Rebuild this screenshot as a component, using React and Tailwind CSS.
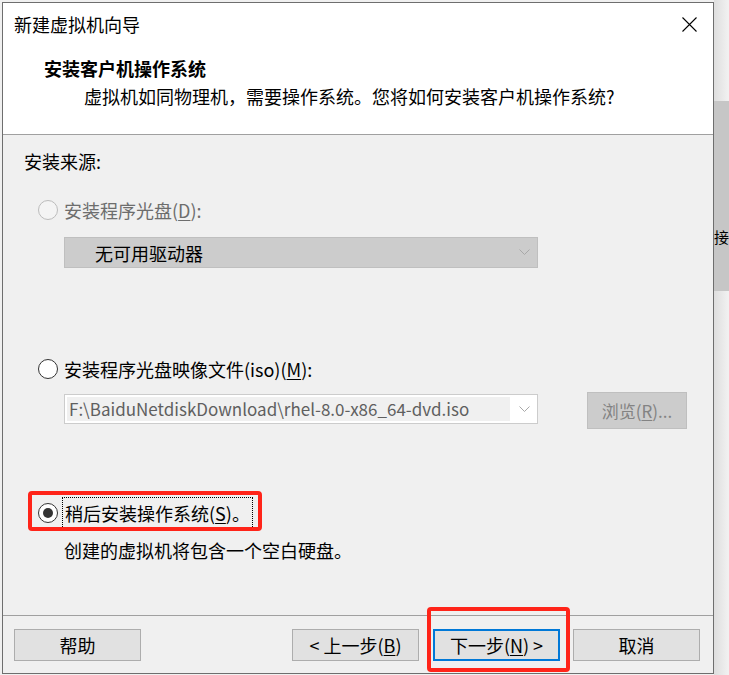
import React from 'react';

const font = "font-['Noto_Sans_CJK_SC','Noto_Sans',sans-serif]";

function Radio({ state }) {
  if (state === 'disabled') {
    return <span className="w-[20px] h-[20px] rounded-full border border-[#bcbcbc] bg-[#f4f4f4] shrink-0" />;
  }
  return (
    <span className="w-[20px] h-[20px] rounded-full border border-[#333333] bg-white shrink-0 flex items-center justify-center">
      {state === 'checked' && <span className="w-[10px] h-[10px] rounded-full bg-[#333333]" />}
    </span>
  );
}

function Chevron() {
  return (
    <svg width="11" height="7" viewBox="0 0 11 7" className="shrink-0">
      <polyline points="0.5,0.5 5.5,5.5 10.5,0.5" fill="none" stroke="#a8a8a8" strokeWidth="1" />
    </svg>
  );
}

function Button({ children, primary, className = '' }) {
  return (
    <div
      className={`w-[127px] h-[32px] flex items-center justify-center bg-[#e1e1e1] text-black text-[18px] leading-[24px] ${
        primary ? 'border-2 border-[#0078d7]' : 'border border-[#adadad]'
      } ${className}`}
    >
      {children}
    </div>
  );
}

export default function App() {
  return (
    <div className={`w-[729px] h-[675px] bg-[#f0f0f0] flex overflow-hidden ${font}`}>
      {/* dialog window */}
      <div className="mt-[2px] ml-[2px] w-[712px] h-[672px] shrink-0 border border-[#6e6e6e] bg-[#f0f0f0] flex flex-col">
        {/* title + header */}
        <div className="h-[132px] shrink-0 bg-white border-b border-[#a0a0a0]">
          <div className="pt-[9px] pl-[11px] pr-[16px] flex items-center justify-between">
            <span className="text-[18px] leading-[24px] text-black">新建虚拟机向导</span>
            <svg width="15" height="15" viewBox="0 0 15 15">
              <path d="M0.5 0.5 L14.5 14.5 M14.5 0.5 L0.5 14.5" stroke="#000" strokeWidth="1.1" fill="none" />
            </svg>
          </div>
          <div className="mt-[20px] pl-[41px] text-[18px] leading-[24px] font-bold text-black">安装客户机操作系统</div>
          <div className="mt-[4px] pl-[81px] text-[18px] leading-[24px] text-black">
            虚拟机如同物理机，需要操作系统。您将如何安装客户机操作系统?
          </div>
        </div>

        {/* body */}
        <div className="h-[480px] shrink-0 text-[18px] leading-[24px]">
          <div className="pt-[14px] pl-[21px] text-black">安装来源:</div>

          <div className="mt-[25px] pl-[35px] flex items-center gap-[6px] text-[#6d6d6d]">
            <Radio state="disabled" />
            <span>
              安装程序光盘(<u className="underline-offset-2">D</u>):
            </span>
          </div>

          <div className="mt-[15px] ml-[61px] w-[474px] h-[31px] bg-[#cccccc] border border-[#bfbfbf] flex items-center justify-between pl-[30px] pr-[7px]">
            <span className="text-black">无可用驱动器</span>
            <Chevron />
          </div>

          <div className="mt-[89px] pl-[35px] flex items-center gap-[6px] text-black">
            <Radio state="off" />
            <span>
              安装程序光盘映像文件(iso)(<u className="underline-offset-2">M</u>):
            </span>
          </div>

          <div className="mt-[11px] flex items-start">
            <div className="mt-[2px] ml-[61px] w-[474px] h-[30px] bg-white border border-[#cccccc] flex items-center justify-between p-[2px] pr-[7px]">
              <div className="w-[443px] h-full bg-[#f0f0f0] flex items-center pl-[2px] text-[17px] text-[#5f5f5f] whitespace-nowrap overflow-hidden">
                F:\BaiduNetdiskDownload\rhel-8.0-x86_64-dvd.iso
              </div>
              <Chevron />
            </div>
            <div className="ml-[49px] w-[100px] h-[37px] bg-[#cccccc] border border-[#bfbfbf] flex items-center justify-center text-[17px] text-[#838383]">
              浏览(<u className="underline-offset-2">R</u>)...
            </div>
          </div>

          <div className="relative mt-[68px] pl-[35px] flex items-center gap-[4px] text-black">
            <Radio state="checked" />
            <span className="border border-dotted border-black px-[2px] py-[3px]">
              稍后安装操作系统(<u className="underline-offset-2">S</u>)。
            </span>
            <div className="absolute left-[25px] top-[-6px] w-[234px] h-[40px] border-[4px] border-[#ff2419] rounded-[4px]" />
          </div>

          <div className="mt-[9px] pl-[61px] text-black">创建的虚拟机将包含一个空白硬盘。</div>
        </div>

        {/* footer */}
        <div className="flex-1 border-t border-[#a0a0a0] pt-[13px] flex items-start">
          <Button className="ml-[11px]">帮助</Button>
          <Button className="ml-[151px]">
            &lt; 上一步(<u className="underline-offset-2">B</u>)
          </Button>
          <div className="relative ml-[14px]">
            <Button primary>
              下一步(<u className="underline-offset-2">N</u>) &gt;
            </Button>
            <div className="absolute left-[-6px] top-[-22px] w-[143px] h-[65px] border-[4px] border-[#ff2419] rounded-[4px]" />
          </div>
          <Button className="ml-[13px]">取消</Button>
        </div>
      </div>

      {/* background window peeking out on the right */}
      <div className="flex-1 bg-gradient-to-r from-[#dedede] to-[#f2f2f2] overflow-hidden">
        <div className="mt-[101px] h-[190px] bg-[#c6c6c6] pt-[126px]">
          <span className="block text-[15px] leading-[20px] text-black whitespace-nowrap">接</span>
        </div>
      </div>
    </div>
  );
}
